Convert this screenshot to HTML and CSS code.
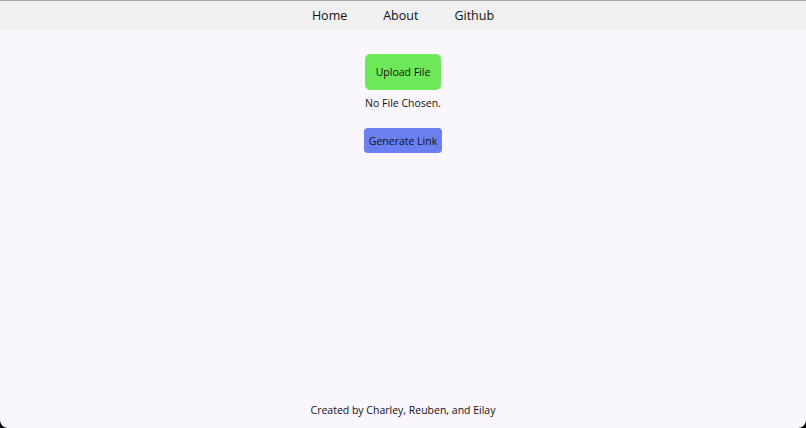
FILE: index.html
```html
<!DOCTYPE html>
<html lang="en">
<head>
    <meta charset="UTF-8">
    <title>File Share</title>
    <link rel="stylesheet" href="styles.css">
</head>
<body>

<nav class="nav">
    <a class="nav-link" href="#">Home</a>
    <a class="nav-link" href="#">About</a>
    <a class="nav-link" href="#">Github</a>
</nav>

<main class="main">
    <label class="upload-btn">Upload File</label>
    <p class="file-name">No File Chosen.</p>
    <button type="button" class="gen-btn">Generate Link</button>
</main>

<footer class="footer">Created by Charley, Reuben, and Eilay</footer>

</body>
</html>
```

FILE: styles.css
```css
html{ height: 100%; background: #000;}
body{ height: 100%; margin: 0; background: #f9f6fd; font-family: "Open Sans", "Noto Sans", sans-serif; color: #111; display: flex; flex-direction: column; border-top: 1px solid #a8a8a8; box-sizing: border-box; border-radius: 0 0 8px 8px; overflow: hidden;}
.nav{ background: #f0f0f0; height: 29px; display: flex; justify-content: center; align-items: center; gap: 36px;}
.nav-link{ color: #111; text-decoration: none; font-size: 12.5px;}
.main{ flex: 1; display: flex; flex-direction: column; align-items: center; padding-top: 24px;}
.upload-btn{ background: #6ce85a; border-radius: 5px; width: 76px; height: 36px; display: flex; align-items: center; justify-content: center; font-size: 10.5px;}
.file-name{ margin: 5px 0 0; font-size: 10.5px; line-height: 16px;}
.gen-btn{ margin-top: 17px; background: #6a80f0; border: 0; border-radius: 4px; width: 78px; height: 25px; font-family: inherit; font-size: 10.5px; color: #111; padding: 0;}
.footer{ text-align: center; font-size: 10.5px; padding-bottom: 11px;}
```
